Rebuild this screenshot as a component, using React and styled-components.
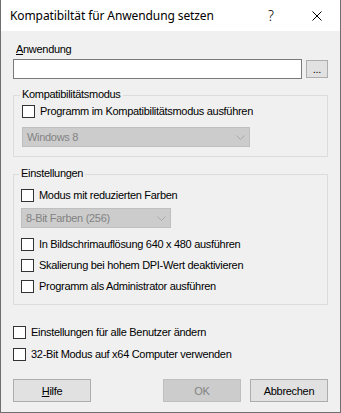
import React from "react";
import styled, { createGlobalStyle } from "styled-components";

const Global = createGlobalStyle`
  html, body { margin: 0; padding: 0; background: #f0f0f0; }
  body { font-family: "Liberation Sans", Arial, sans-serif; font-size: 11px; color: #000; letter-spacing: -0.3px; }
  * { box-sizing: border-box; }
`;

const Window = styled.div`
  width: 341px;
  height: 413px;
  background: #f0f0f0;
  border: 1px solid #6f6f6f;
  border-top: none;
  display: flex;
  flex-direction: column;
`;

const TitleBar = styled.div`
  height: 31px;
  background: #fff;
  display: flex;
  align-items: center;
  padding-left: 9px;
  letter-spacing: 0;
`;

const Title = styled.div`
  font-family: "Noto Sans", "Open Sans", sans-serif;
  font-size: 12px;
  letter-spacing: -0.1px;
  flex: 1;
  white-space: nowrap;
`;

const CaptionButton = styled.div`
  width: 46px;
  height: 31px;
  display: flex;
  align-items: center;
  justify-content: center;
  font-family: "Noto Sans", sans-serif;
  font-size: 14px;
  font-weight: 300;
`;

const Body = styled.div`
  padding: 12px 12px 0;
  display: flex;
  flex-direction: column;
`;

const Label = styled.div`
  line-height: 13px;
  padding-left: 3px;
`;

const Accel = styled.span`
  text-decoration: underline;
`;

const FieldRow = styled.div`
  margin-top: 3px;
  display: flex;
  align-items: center;
  gap: 4px;
`;

const TextInput = styled.div`
  width: 289px;
  height: 20px;
  background: #fff;
  border: 1px solid #7a7a7a;
`;

const BrowseButton = styled.div`
  width: 22px;
  height: 18px;
  background: #e1e1e1;
  border: 1px solid #adadad;
  display: flex;
  align-items: flex-end;
  justify-content: center;
  line-height: 13px;
  padding-bottom: 1px;
  font-size: 11px;
`;

const Group = styled.fieldset`
  margin: ${(p) => p.$top}px 0 0;
  padding: 0 8px ${(p) => p.$bottom}px ${(p) => p.$left}px;
  border: 1px solid #dcdcdc;
  min-width: 0;
  display: flex;
  flex-direction: column;
  align-items: flex-start;
`;

const Legend = styled.legend`
  margin-left: -2px;
  padding: 0 2px 2px;
  line-height: 13px;
`;

const CheckRow = styled.div`
  margin-top: ${(p) => p.$top}px;
  display: flex;
  align-items: center;
  gap: 5px;
  height: 13px;
  line-height: 13px;
  white-space: nowrap;
`;

const Box = styled.span`
  width: 13px;
  height: 13px;
  flex: none;
  background: #fff;
  border: 1px solid #333;
`;

const Combo = styled.div`
  margin-top: ${(p) => p.$top}px;
  width: ${(p) => p.$w}px;
  height: 20px;
  background: #cccccc;
  border: 1px solid #bfbfbf;
  display: flex;
  align-items: center;
  padding: 0 4px 0 4px;
  color: #838383;
  font-size: 11px;
`;

const ComboText = styled.span`
  flex: 1;
`;

const ButtonRow = styled.div`
  margin-top: 18px;
  display: flex;
  gap: 9px;
`;

const Button = styled.div`
  width: 78px;
  height: 23px;
  display: flex;
  align-items: center;
  justify-content: center;
  background: ${(p) => (p.$disabled ? "#cccccc" : "#e1e1e1")};
  border: 1px solid ${(p) => (p.$disabled ? "#bfbfbf" : "#adadad")};
  color: ${(p) => (p.$disabled ? "#838383" : "#000")};
  margin-right: ${(p) => (p.$push ? "auto" : "0")};
`;

const Chevron = () => (
  <svg width="9" height="5" viewBox="0 0 9 5">
    <polyline points="0.5,0.5 4.5,4.5 8.5,0.5" fill="none" stroke="#a8a8a8" strokeWidth="1" />
  </svg>
);

const CloseIcon = () => (
  <svg width="10" height="10" viewBox="0 0 10 10">
    <path d="M0.5 0.5 L9.5 9.5 M9.5 0.5 L0.5 9.5" stroke="#000" strokeWidth="1" fill="none" />
  </svg>
);

const Check = ({ top, children }) => (
  <CheckRow $top={top}>
    <Box />
    <span>{children}</span>
  </CheckRow>
);

export default function App() {
  return (
    <>
      <Global />
      <Window>
        <TitleBar>
          <Title>Kompatibiltät für Anwendung setzen</Title>
          <CaptionButton>?</CaptionButton>
          <CaptionButton>
            <CloseIcon />
          </CaptionButton>
        </TitleBar>
        <Body>
          <Label>
            <Accel>A</Accel>nwendung
          </Label>
          <FieldRow>
            <TextInput />
            <BrowseButton>...</BrowseButton>
          </FieldRow>

          <Group $top={9} $bottom={9} $left={8}>
            <Legend>Kompatibilitätsmodus</Legend>
            <Check top={2}>Programm im Kompatibilitätsmodus ausführen</Check>
            <Combo $top={9} $w={228}>
              <ComboText>Windows 8</ComboText>
              <Chevron />
            </Combo>
          </Group>

          <Group $top={10} $bottom={11} $left={7}>
            <Legend>Einstellungen</Legend>
            <Check top={7}>Modus mit reduzierten Farben</Check>
            <Combo $top={6} $w={150}>
              <ComboText>8-Bit Farben (256)</ComboText>
              <Chevron />
            </Combo>
            <Check top={10}>In Bildschrimauflösung 640 x 480 ausführen</Check>
            <Check top={8}>Skalierung bei hohem DPI-Wert deaktivieren</Check>
            <Check top={8}>Programm als Administrator ausführen</Check>
          </Group>

          <Check top={21}>Einstellungen für alle Benutzer ändern</Check>
          <Check top={9}>32-Bit Modus auf x64 Computer verwenden</Check>

          <ButtonRow>
            <Button $push>
              <span>
                <Accel>H</Accel>ilfe
              </span>
            </Button>
            <Button $disabled>OK</Button>
            <Button>Abbrechen</Button>
          </ButtonRow>
        </Body>
      </Window>
    </>
  );
}
